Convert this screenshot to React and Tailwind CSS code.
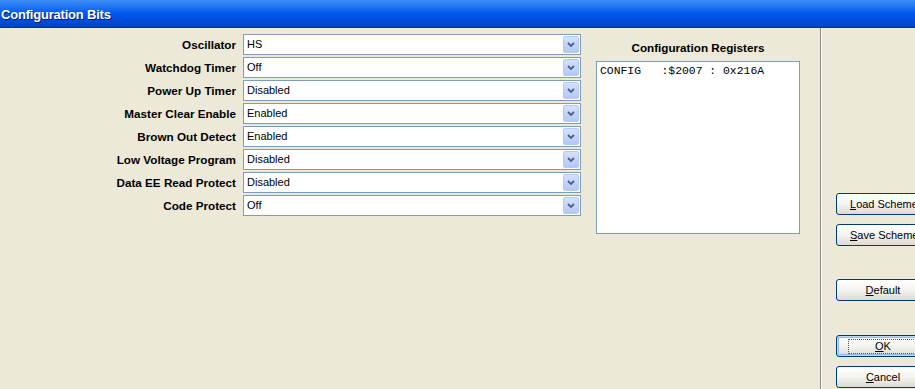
import React from 'react';

const fields = [
  { label: 'Oscillator', value: 'HS' },
  { label: 'Watchdog Timer', value: 'Off' },
  { label: 'Power Up Timer', value: 'Disabled' },
  { label: 'Master Clear Enable', value: 'Enabled' },
  { label: 'Brown Out Detect', value: 'Enabled' },
  { label: 'Low Voltage Program', value: 'Disabled' },
  { label: 'Data EE Read Protect', value: 'Disabled' },
  { label: 'Code Protect', value: 'Off' },
];

function Combo({ value }) {
  return (
    <div className="flex items-center h-[21px] w-[338px] border border-[#7f9db9] bg-white pl-[3px] pr-[1px]">
      <span className="flex-1 text-[11px] text-black leading-none">{value}</span>
      <div className="h-[17px] w-[16px] rounded-[2px] border border-[#b6c9f3] bg-gradient-to-b from-[#d4e0fb] to-[#b3c8f5] flex items-center justify-center">
        <svg width="8" height="6" viewBox="0 0 8 6">
          <path d="M1 1 L4 4 L7 1" stroke="#4d6185" strokeWidth="1.8" fill="none" />
        </svg>
      </div>
    </div>
  );
}

function XpButton({ accel, rest, focused, className = '' }) {
  return (
    <button
      className={`w-[94px] h-[22px] shrink-0 rounded-[3px] border border-[#003c74] bg-gradient-to-b from-white via-[#f4f4f0] to-[#dcdad0] text-[11px] text-black flex items-center justify-center whitespace-nowrap ${focused ? 'shadow-[inset_0_0_0_1px_#c4d7f7,inset_0_0_0_2px_#98b8ea]' : ''} ${className}`}
    >
      <span className={focused ? 'outline outline-1 outline-dotted outline-[#555] px-[26px] leading-[13px]' : ''}>
        <span className="underline">{accel}</span>
        {rest}
      </span>
    </button>
  );
}

export default function App() {
  return (
    <div className="w-[915px] h-[389px] overflow-hidden bg-[#ece9d8] font-['Liberation_Sans',Arial,sans-serif] flex flex-col">
      <div className="h-[28px] shrink-0 bg-gradient-to-b from-[#3c8ff7] via-[#0058ee] to-[#0043c8] border-b border-[#0033a0] flex items-center pl-[1px] pt-[3px]">
        <span className="text-white font-bold text-[13px] tracking-[-0.2px] [text-shadow:1px_1px_0_#0a1e6a]">Configuration Bits</span>
      </div>
      <div className="flex-1 flex">
        <div className="w-[820px] shrink-0 flex pt-[6px]">
          <div className="flex flex-col gap-[2px]">
            {fields.map((f) => (
              <div key={f.label} className="flex items-center">
                <div className="w-[236px] text-right text-[11.7px] font-bold text-black">{f.label}</div>
                <div className="ml-[7px]">
                  <Combo value={f.value} />
                </div>
              </div>
            ))}
          </div>
          <div className="ml-[15px] flex flex-col">
            <div className="h-[27px] flex items-center justify-center text-[11.7px] font-bold text-black pt-[1px]">
              Configuration Registers
            </div>
            <div className="w-[204px] h-[173px] border border-[#7f9db9] bg-white px-[3px] pt-[4px]">
              <pre className="font-['Liberation_Mono','Courier_New',monospace] text-[11.4px] leading-none text-black">CONFIG   :$2007 : 0x216A</pre>
            </div>
          </div>
        </div>
        <div className="flex-1 border-l border-[#8d8b7e] shadow-[inset_1px_0_0_#fff] flex flex-col pl-[15px] pt-[165px]">
          <XpButton accel="L" rest="oad Scheme" className="justify-start pl-[13px]" />
          <XpButton accel="S" rest="ave Scheme" className="justify-start pl-[13px] mt-[9px]" />
          <XpButton accel="D" rest="efault" className="mt-[33px]" />
          <XpButton accel="O" rest="K" focused className="mt-[34px]" />
          <XpButton accel="C" rest="ancel" className="mt-[9px]" />
        </div>
      </div>
    </div>
  );
}
